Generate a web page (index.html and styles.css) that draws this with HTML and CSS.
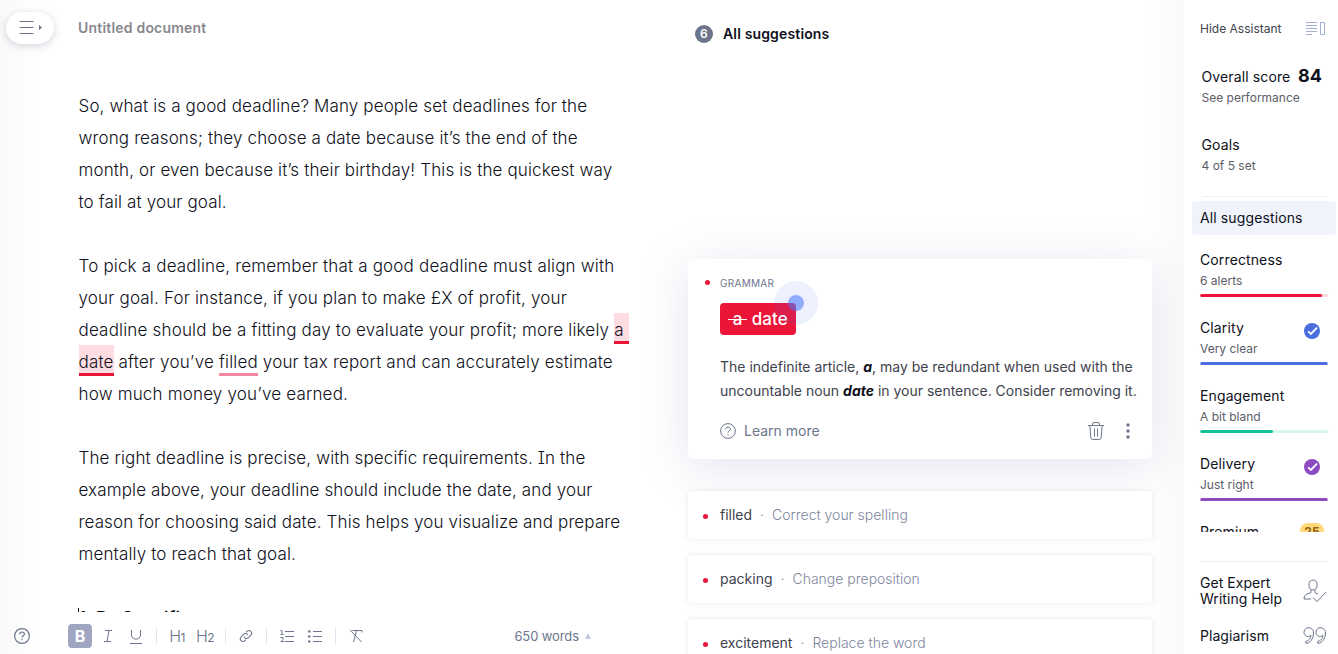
FILE: index.html
```
<!DOCTYPE html>
<html lang="en">

<head>
    <meta charset="UTF-8">
    <meta name="viewport" content="width=device-width, initial-scale=1.0">
    <title>Untitled document</title>
    <link rel="stylesheet" href="styles.css">
</head>

<body>
    <div class="app">
        <div class="rail">
            <button class="menu-button" aria-label="Menu">
                <svg width="24" height="16" viewBox="0 0 24 16">
                    <path d="M.5 1.5h14M.5 7.5h14M.5 13.5h14" fill="none" stroke="#6d758d" />
                    <path d="M20 4.8l2.9 2.7-2.9 2.7z" fill="#6d758d" />
                </svg>
            </button>
            <svg class="help" width="16" height="16" viewBox="0 0 16 16" fill="none" stroke="#6d758d" stroke-width="1.2">
                <circle cx="8" cy="8" r="7.4" />
                <path d="M5.7 6.3C5.7 3.2 10.4 3.3 10.4 6.1 10.4 7.9 8 7.6 8 9.7M8 11v1.3" />
            </svg>
        </div>

        <main class="editor">
            <div class="doc-title">Untitled document</div>
            <div class="document">
                <p>So, what is a good deadline? Many people set deadlines for the<br>
                    wrong reasons; they choose a date because it’s the end of the<br>
                    month, or even because it’s their birthday! This is the quickest way<br>
                    to fail at your goal.</p>
                <p class="current">To pick a deadline, remember that a good deadline must align with<br>
                    your goal. For instance, if you plan to make £X of profit, your<br>
                    deadline should be a fitting day to evaluate your profit; more likely <span class="alert active">a&nbsp;</span><br>
                    <span class="alert active">date</span> after you’ve <span class="alert">filled</span> your tax report and can accurately estimate<br>
                    how much money you’ve earned.</p>
                <p>The right deadline is precise, with specific requirements. In the<br>
                    example above, your deadline should include the date, and your<br>
                    reason for choosing said date. This helps you visualize and prepare<br>
                    mentally to reach that goal.</p>
                <h3><span class="caret"></span>1. Be Specific</h3>
            </div>
            <div class="toolbar">
                <div class="tool bold">B</div>
                <div class="tool">
                    <svg width="24" height="24" viewBox="0 0 24 24"><path d="M9 6.5h7M8 17.5h7M13 6.5l-2 11" /></svg>
                </div>
                <div class="tool">
                    <svg width="24" height="24" viewBox="0 0 24 24"><path d="M7.5 6v5c0 5.500 9 5.500 9 0V6M6 19.500h12" /></svg>
                </div>
                <i class="sep"></i>
                <div class="tool heading">H<small>1</small></div>
                <div class="tool heading">H<small>2</small></div>
                <i class="sep"></i>
                <div class="tool">
                    <svg width="24" height="24" viewBox="0 0 24 24">
                        <g transform="rotate(-45 12 12)">
                            <path d="M9.500 14.500H8a2.700 2.700 0 0 1 0-5.400h3.500a2.700 2.700 0 0 1 2.500 3.700M14.500 9.500H16a2.700 2.700 0 0 1 0 5.400h-3.500a2.700 2.700 0 0 1-2.500-3.700" />
                        </g>
                    </svg>
                </div>
                <i class="sep"></i>
                <div class="tool">
                    <svg width="24" height="24" viewBox="0 0 24 24">
                        <path d="M10 7.500h9M10 12.500h9M10 17.500h9M5.500 6.500h1.500v4M5.500 10.500h3M5.500 13.500h2.500v2l-2 2h3" />
                    </svg>
                </div>
                <div class="tool">
                    <svg width="24" height="24" viewBox="0 0 24 24">
                        <path d="M10 7.500h9M10 12.500h9M10 17.500h9" />
                        <path d="M5 7.500h2.500M5 12.500h2.500M5 17.500h2.500" stroke-width="2" />
                    </svg>
                </div>
                <i class="sep"></i>
                <div class="tool">
                    <svg width="24" height="24" viewBox="0 0 24 24"><path d="M8.500 6.500H18v2M12.500 6.500l-3 11.500M6 6l11.500 12" /></svg>
                </div>
                <div class="words">650 words <b></b></div>
            </div>
        </main>

        <section class="suggestions">
            <header><span class="count">6</span>All suggestions</header>

            <article class="card">
                <div class="category"><i class="dot"></i>GRAMMAR</div>
                <div class="fix"><s>&nbsp;a&nbsp;</s> date<span class="pointer"></span></div>
                <p>The indefinite article, <em>a</em>, may be redundant when used with the<br>
                    uncountable noun <em>date</em> in your sentence. Consider removing it.</p>
                <div class="card-footer">
                    <svg width="16" height="16" viewBox="0 0 16 16" fill="none" stroke="#6d758d">
                        <circle cx="8" cy="8" r="7.4" />
                        <path d="M5.700 6.300C5.700 3.200 10.400 3.300 10.400 6.100 10.400 7.900 8 7.600 8 9.700M8 11v1.300" />
                    </svg>
                    <span>Learn more</span>
                    <svg class="trash" width="16" height="20" viewBox="0 0 16 20" fill="none" stroke="#6d758d">
                        <path d="M0 4.500h16M4.500 4.500V3q0-1.500 1.500-1.500h4q1.500 0 1.500 1.500v1.500M1.800 4.500l1 12q.2 2 2 2h6.400q1.800 0 2-2l1-12M6.500 7.500v8M9.500 7.500v8" />
                    </svg>
                    <svg width="4" height="16" viewBox="0 0 4 16" fill="#6d758d">
                        <circle cx="2" cy="2" r="1.700" />
                        <circle cx="2" cy="8" r="1.700" />
                        <circle cx="2" cy="14" r="1.700" />
                    </svg>
                </div>
            </article>

            <div class="row"><i class="dot"></i>filled<span>·</span><span>Correct your spelling</span></div>
            <div class="row"><i class="dot"></i>packing<span>·</span><span>Change preposition</span></div>
            <div class="row"><i class="dot"></i>excitement<span>·</span><span>Replace the word</span></div>
        </section>

        <aside class="assistant">
            <div class="hide">
                Hide Assistant
                <svg width="20" height="14" viewBox="0 0 20 14" fill="none" stroke="#a3b0d4">
                    <path d="M0 .5h11M0 3.500h11M0 6.500h11M0 9.500h11M0 12.500h6M14.500 .5h4v12h-4z" />
                </svg>
            </div>
            <div class="metrics">
                <div class="metric top">
                    <h4>Overall score <strong>84</strong></h4>
                    <small>See performance</small>
                </div>
                <div class="metric top">
                    <h4>Goals</h4>
                    <small>4 of 5 set</small>
                </div>
                <div class="selected">All suggestions</div>
                <div class="metric">
                    <h4>Correctness</h4>
                    <small>6 alerts</small>
                    <div class="bar red"><i style="width: 95%"></i></div>
                </div>
                <div class="metric">
                    <h4>Clarity
                        <svg width="16" height="16" viewBox="0 0 16 16"><circle cx="8" cy="8" r="8" fill="#4a6ee0" /><path d="M4.200 8.300l2.700 2.700L13 4.700" fill="none" stroke="#fff" stroke-width="1.800" /></svg>
                    </h4>
                    <small>Very clear</small>
                    <div class="bar blue"><i style="width: 100%"></i></div>
                </div>
                <div class="metric">
                    <h4>Engagement</h4>
                    <small>A bit bland</small>
                    <div class="bar green"><i style="width: 57%"></i></div>
                </div>
                <div class="metric">
                    <h4>Delivery
                        <svg width="16" height="16" viewBox="0 0 16 16"><circle cx="8" cy="8" r="8" fill="#8c4bc0" /><path d="M4.200 8.300l2.700 2.700L13 4.700" fill="none" stroke="#fff" stroke-width="1.800" /></svg>
                    </h4>
                    <small>Just right</small>
                    <div class="bar purple"><i style="width: 100%"></i></div>
                </div>
                <div class="metric">
                    <h4>Premium <span class="badge">25</span></h4>
                </div>
            </div>
            <div class="extras">
                <div class="extra expert">
                    <span>Get Expert<br>Writing Help</span>
                    <svg width="24" height="24" viewBox="0 0 24 24" fill="none" stroke="#6d758d">
                        <path d="M6 5c0-5.300 8-5.300 8 0v2c0 5.300-8 5.300-8 0zM8 10.500v3l-5 2q-2 .8-2 4.500h7M12 10.500v3l3 1.500M10 18.500l4 4 9-9.500" />
                    </svg>
                </div>
                <div class="extra">
                    <span>Plagiarism</span>
                    <svg width="24" height="20" viewBox="0 0 24 20" fill="none" stroke="#6d758d">
                        <path d="M8 9.500C4.500 12 1 9.500 1 6.500 1 0 10.500 0 10.500 7c0 6-3.500 10-7.500 10.500l-.5-2C6 15 8 12 8 9.500z" />
                        <path d="M20 9.500C16.500 12 13 9.500 13 6.500 13 0 22.500 0 22.500 7c0 6-3.500 10-7.500 10.500l-.5-2C18 15 20 12 20 9.500z" />
                    </svg>
                </div>
            </div>
        </aside>
    </div>
</body>

</html>
```
FILE: styles.css
```
* {
    box-sizing: border-box;
}

body {
    margin: 0;
    font-family: Inter, "Liberation Sans", sans-serif;
    font-size: 14px;
    color: #0e101a;
    background: #fff;
}

svg {
    display: block;
}

.app {
    display: flex;
    height: 654px;
    overflow: hidden;
}

/* left rail */
.rail {
    width: 78px;
    display: flex;
    flex-direction: column;
    justify-content: space-between;
    padding: 12px 6px 10px;
    background: linear-gradient(to right, #f9f9f9, #fff 36px);
}

.menu-button {
    width: 48px;
    height: 32px;
    padding: 0 0 0 13px;
    border: none;
    border-radius: 16px;
    background: #fff;
    box-shadow: 0 2px 8px rgba(109, 117, 141, 0.3);
}

.help {
    margin-left: 8px;
}

/* editor */
.editor {
    width: 552px;
    display: flex;
    flex-direction: column;
}

.doc-title {
    height: 90px;
    padding-top: 18px;
    line-height: 20px;
    font-weight: 600;
    letter-spacing: 0.2px;
    color: #87888d;
}

.document {
    height: 522px;
    overflow: hidden;
    padding-left: 0.5px;
    font-size: 17px;
    font-weight: 300;
    line-height: 32px;
    letter-spacing: 0.14px;
    white-space: nowrap;
    font-feature-settings: "cv08";
}

.document p {
    margin: 0 0 32px;
}

.document p.current {
    letter-spacing: 0.18px;
}

.document h3 {
    margin: 0 0 0 -0.5px;
    font-size: 17px;
    font-weight: 600;
    display: flex;
}

.caret {
    width: 1px;
    height: 20px;
    margin: 6px 0 0;
    background: #0e101a;
}

.alert {
    padding: 7px 0 1px;
    border-bottom: 3px solid #f389a1;
}

.alert.active {
    background: #ffdbe2;
    border-color: #eb1538;
}

.toolbar {
    display: flex;
    align-items: center;
    height: 42px;
    margin-left: -10px;
    padding-top: 6px;
    color: #6d758d;
}

.tool {
    width: 24px;
    height: 24px;
    margin-right: 4px;
    border-radius: 4px;
}

.tool path {
    fill: none;
    stroke: #6d758d;
}

.tool.bold {
    background: #9fa6c1;
    color: #fff;
    font-weight: 700;
    font-size: 16px;
    line-height: 24px;
    text-align: center;
}

.tool.heading {
    font-size: 16px;
    font-weight: 300;
    line-height: 24px;
    text-align: center;
    white-space: nowrap;
    letter-spacing: -0.6px;
}

.tool small {
    font-size: 12px;
    font-weight: 400;
}

.sep {
    width: 1px;
    height: 16px;
    margin: 0 8px 0 4px;
    background: #e0e3f0;
}

.words {
    display: flex;
    align-items: center;
    margin-left: auto;
    margin-right: 39px;
    font-size: 13px;
    letter-spacing: -0.1px;
}

.words b {
    margin-left: 6px;
    border: 3.5px solid transparent;
    border-top: none;
    border-bottom: 6px solid #c4cadf;
}

/* suggestions */
.suggestions {
    width: 554px;
    padding: 0 32px 0 58px;
    background: linear-gradient(to left, #fafafa, #fff 36px);
}

.suggestions header {
    display: flex;
    align-items: center;
    height: 67px;
    padding-left: 7px;
    font-weight: 600;
    letter-spacing: 0.15px;
}

.count {
    width: 18px;
    height: 18px;
    margin-right: 10px;
    border-radius: 50%;
    background: #6d758d;
    color: #fff;
    font-size: 12px;
    line-height: 18px;
    text-align: center;
}

.dot {
    width: 5px;
    height: 5px;
    border-radius: 50%;
    background: #eb1538;
}

.card {
    height: 200px;
    margin: 192px 0 32px;
    padding: 18px 16px 0 32px;
    border-radius: 5px;
    background: #fff;
    box-shadow: 0 8px 50px rgba(109, 125, 175, 0.2);
}

.category {
    display: flex;
    margin-left: -15px;
    font-size: 10px;
    line-height: 13px;
    letter-spacing: 0.3px;
    color: #6d758d;
}

.category .dot {
    margin: 3px 10px 0 0;
}

.fix {
    position: relative;
    width: 76px;
    height: 32px;
    margin-top: 13px;
    padding-left: 8px;
    border-radius: 4px;
    background: #eb1538;
    color: #fff;
    font-size: 17px;
    font-weight: 500;
    line-height: 32px;
    letter-spacing: 0.1px;
    white-space: nowrap;
}

.fix s {
    text-decoration-thickness: 1px;
}

/* click marker over the corner of the button */
.pointer {
    position: absolute;
    top: -22px;
    right: -22px;
    width: 44px;
    height: 44px;
    border: 14px solid rgba(74, 116, 250, 0.1);
    border-radius: 50%;
    background: rgba(74, 116, 250, 0.6);
    background-clip: padding-box;
}

.card p {
    margin: 20px 0 0;
    line-height: 24px;
    letter-spacing: -0.01px;
    color: #40424e;
    white-space: nowrap;
}

.card em {
    font-weight: 700;
    color: #0e101a;
}

.card-footer {
    display: flex;
    align-items: center;
    height: 24px;
    margin-top: 16px;
    padding-right: 6px;
    color: #6d758d;
}

.card-footer span {
    margin: -1px 0 0 8px;
}

.trash {
    margin: 0 22px 0 auto;
}

.row {
    display: flex;
    align-items: center;
    height: 48px;
    margin-bottom: 16px;
    padding: 0 0 1px 15px;
    border-radius: 4px;
    background: rgba(255, 255, 255, 0.8);
    box-shadow: 0 0 6px rgba(109, 117, 141, 0.16);
    color: #40424e;
}

.row .dot {
    margin: 3px 12px 0 0;
}

.row span {
    margin-left: 8px;
    color: #80869e;
    font-weight: 300;
}

/* assistant panel */
.assistant {
    width: 154px;
    display: flex;
    flex-direction: column;
    background: #fff;
    letter-spacing: 0.12px;
}

.hide {
    display: flex;
    align-items: center;
    justify-content: space-between;
    height: 58px;
    padding: 0 12px 1px 16px;
    font-size: 12px;
    letter-spacing: 0;
    color: #40424e;
}

.metrics {
    height: 474px;
    padding: 8px 10px 0 16px;
    overflow: hidden;
}

.metric {
    height: 68px;
}

.metric.top {
    padding-left: 1.5px;
}

.metric h4 {
    display: flex;
    align-items: center;
    justify-content: space-between;
    height: 20px;
    margin: 0;
    padding-right: 8px;
    font-size: 14px;
    font-weight: 400;
}

.metric svg {
    margin-top: 8px;
}

.metric strong {
    margin: -2px -2px 0 0;
    font-size: 18px;
    letter-spacing: 0;
}

.metric small {
    display: block;
    height: 24px;
    font-size: 12px;
    line-height: 24px;
    letter-spacing: 0;
    color: #5b5d68;
}

.bar {
    height: 3px;
    margin-top: 1px;
    border-radius: 2px;
    overflow: hidden;
}

.bar i {
    display: block;
    height: 3px;
    border-radius: 2px;
}

.red {
    background: #ffd6de;
}

.red i {
    background: #eb1538;
}

.blue i {
    background: #4a6ee0;
}

.green {
    background: #d5f7ee;
}

.green i {
    background: #15c39a;
}

.purple i {
    background: #8c4bc0;
}

.selected {
    position: relative;
    height: 34px;
    margin: -1px -8px 14px;
    padding-left: 8px;
    border-radius: 4px;
    background: #f0f2fc;
    line-height: 34px;
}

.selected::before {
    content: "";
    position: absolute;
    top: -5px;
    left: 10px;
    width: 126px;
    height: 1px;
    background: #eceef8;
}

.badge {
    width: 24px;
    height: 16px;
    margin-right: -4px;
    border-radius: 8px;
    background: #ffd877;
    color: #94610a;
    font-size: 12px;
    font-weight: 700;
    line-height: 18px;
    text-align: center;
}

.extras {
    margin: 29px 10px 0 16px;
    border-top: 1px solid #eceef8;
}

.extra {
    display: flex;
    align-items: center;
    justify-content: space-between;
    height: 32px;
    line-height: 16px;
    letter-spacing: 0.05px;
}

.extra.expert {
    height: 58px;
}

.extra svg {
    margin-right: 1px;
}
```
